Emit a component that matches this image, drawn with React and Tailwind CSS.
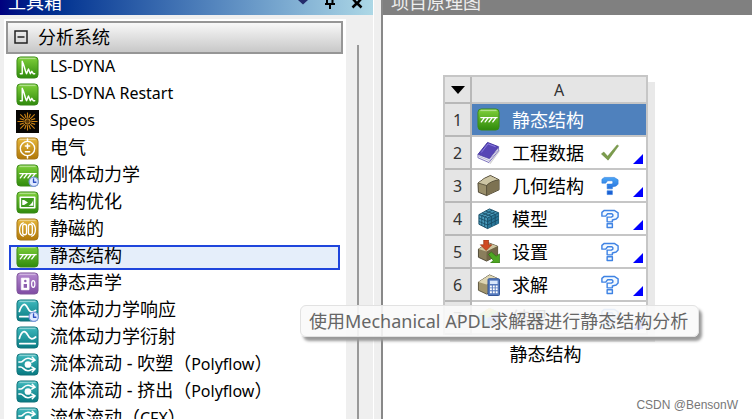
import React, { useState } from "react";

const TILE_COLORS = {
  green: { top: "#7fd03a", bottom: "#2f8a0c", edge: "#3c8a1a" },
  gold: { top: "#e6b73c", bottom: "#b07708", edge: "#a5761b" },
  purple: { top: "#b489cf", bottom: "#7f4ba3", edge: "#81589c" },
  teal: { top: "#3fb9bd", bottom: "#087a82", edge: "#14737a" },
};

const TileGradients = () => (
  <svg className="absolute h-0 w-0" aria-hidden="true">
    <defs>
      {Object.entries(TILE_COLORS).map(([name, c]) => (
        <linearGradient key={name} id={`tile-${name}`} x1="0" y1="0" x2="0" y2="1">
          <stop offset="0" stopColor={c.top} />
          <stop offset="1" stopColor={c.bottom} />
        </linearGradient>
      ))}
      <linearGradient id="help-blue" x1="0" y1="0" x2="0" y2="1">
        <stop offset="0" stopColor="#4aa5f5" />
        <stop offset="1" stopColor="#1557d0" />
      </linearGradient>
    </defs>
  </svg>
);

const Icon = ({ children }) => (
  <svg viewBox="0 0 24 24" className="h-[23px] w-[23px] shrink-0" fill="none" aria-hidden="true">
    {children}
  </svg>
);

const Tile = ({ color, children }) => (
  <Icon>
    <rect x="1" y="1" width="22" height="22" rx="3.5" fill={`url(#tile-${color})`} stroke={TILE_COLORS[color].edge} />
    <path d="M3.5 2.5h17" stroke="#fff" strokeOpacity=".4" strokeWidth="1.5" />
    <g stroke="#fff" strokeWidth="1.6" strokeLinecap="round" strokeLinejoin="round">
      {children}
    </g>
  </Icon>
);

const Clock = () => (
  <g>
    <circle cx="18.5" cy="18.5" r="4.8" fill="#dfe9ff" stroke="#7d97dc" strokeWidth="1.3" />
    <path d="M18.3 15.5v3.5h2.5" stroke="#2d4fc0" strokeWidth="1.4" />
  </g>
);

const Hatch = () => (
  <path d="M4 10h17M7.500 10.500L4.500 14.500M11.500 10.500l-3 4M15.500 10.500l-3 4M19.500 10.500l-3 4" strokeWidth="1.400" />
);

const ICONS = {
  dyna: (
    <Tile color="green">
      <path d="M4.500 18.500h2V5.500C8.500 9 9 14.500 11 18.500l2-5 2 5 1.500-2.500 1.500 2.500h1.500" strokeWidth="1.500" />
    </Tile>
  ),
  speos: (
    <Icon>
      <rect width="24" height="24" fill="#080603" />
      <path
        d="M12 8V2.5M12 16v5.5M8 12H1.5M16 12h6.5M9.2 9.2L4.5 4.5M14.8 9.2l4.7-4.7M9.2 14.8l-4.7 4.7M14.8 14.8l4.7 4.7M10.5 8.3L9 4M13.5 8.3L15 4M10.5 15.7L9 20M13.5 15.7L15 20M8.3 10.5L4 9M15.7 10.5L20 9M8.3 13.5L4 15M15.7 13.5L20 15"
        stroke="#c98316"
        strokeWidth="1.2"
      />
      <circle cx="12" cy="12" r="2.8" fill="#5c3906" stroke="#d8952a" />
    </Icon>
  ),
  electric: (
    <Tile color="gold">
      <circle cx="12" cy="12" r="7.5" strokeWidth="1.4" />
      <path d="M12 2v2.5M12 19.5V22M9.8 9.5h4.4M12 7.3v4.4M9.8 15.5h4.4" />
    </Tile>
  ),
  rigid: (
    <Tile color="green">
      <Hatch />
      <Clock />
    </Tile>
  ),
  structure: (
    <Tile color="green">
      <Hatch />
    </Tile>
  ),
  optimize: (
    <Tile color="green">
      <rect x="4.500" y="6.500" width="15" height="11" fill="#3d9a1c" strokeWidth="1.700" />
      <path d="M6.500 9.500h2l4 2.500-4 2.500h-2z" fill="#fff" stroke="none" />
      <path d="M18 9.500v6h-5c2.500-1 4-3 5-6z" fill="#fff" stroke="none" />
    </Tile>
  ),
  magnetic: (
    <Tile color="gold">
      <g strokeWidth="1.4">
        <path d="M7.500 5C2.500 7 2.500 17 7.500 19M16.500 5c5 2 5 12 0 14" />
        <rect x="7" y="6.500" width="4" height="11" rx="2" />
        <rect x="13" y="6.500" width="4" height="11" rx="2" />
      </g>
    </Tile>
  ),
  acoustic: (
    <Tile color="purple">
      <rect x="6" y="6.500" width="7.500" height="12" fill="#fff" strokeWidth="1" />
      <circle cx="9.700" cy="9.500" r="1.300" fill="#8d5fae" stroke="none" />
      <rect x="8" y="12.500" width="3.500" height="4" fill="#8d5fae" stroke="none" />
      <ellipse cx="18" cy="12.500" rx="1.700" ry="3.500" strokeWidth="1.300" />
    </Tile>
  ),
  response: (
    <Tile color="teal">
      <path d="M3.500 13C6 5 9.500 3.500 12 9s5 5 8.500 3M4 18.500h10" strokeWidth="1.800" />
      <Clock />
    </Tile>
  ),
  diffraction: (
    <Tile color="teal">
      <path d="M3.500 13C6 4.500 9.500 4 12 9s5 5.500 8.500 2.500M4 18.500h16" strokeWidth="1.800" />
    </Tile>
  ),
  flow: (
    <Tile color="teal">
      <circle cx="12.500" cy="12" r="3.500" fill="#fff" stroke="none" />
      <path
        d="M3 9.500h2C7.500 9.500 8 5.500 12.500 5.500c3 0 4 2 7 2M17 4.500l3 3-3.500 2M3 14.500h2c2.500 0 3 4 7.500 4 3 0 4-2 7-2M16.500 14.500l3.500 2-3 3"
        strokeWidth="1.600"
      />
    </Tile>
  ),
  book: (
    <Icon>
      <path d="M3 19l10 4.500L23.500 9v2L14 24z" fill="#777" opacity=".35" />
      <path d="M1 14L11 1.500 22.500 6 13 18.500z" fill="#5746b5" stroke="#4233a0" />
      <path d="M1 14v3.500l11.500 5L22.500 10V6.500L13 18.500z" fill="#f0eff7" stroke="#5d50ac" strokeWidth=".8" />
      <path d="M2 16l11 4.500L22 8.500" stroke="#b9b5d5" />
      <path d="M4.500 12l7-9 8 3" stroke="#8b7de0" />
    </Icon>
  ),
  geometry: (
    <Icon>
      <path d="M1 9.500Q8 3.500 14 1.500L23 6v10.500L10 22.500 1.500 19z" fill="#9a8f6b" stroke="#4b4431" />
      <path d="M1.500 9.500Q8 4 14 2l8.500 4Q14 7.500 10 12z" fill="#cdc5a4" />
      <path d="M10 12Q14 7.500 22.500 6v10.500L10 22.500z" fill="#7d7252" />
      <path d="M1.500 9.500L10 12v10.500M10 12Q14 7.500 22.500 6" stroke="#4b4431" strokeWidth=".8" />
    </Icon>
  ),
  mesh: (
    <Icon>
      <path d="M2 8l11-6 9.500 4v11L11 22.500 2 18z" fill="#4a9bbb" stroke="#174c65" />
      <path d="M11 11.500L22.500 6v11L11 22.500z" fill="#2a7799" />
      <path
        d="M2 8l9 3.500L22.500 6M11 11.500v11M5 9.200v10.500M8 10.400v10.600M2 11.500l9 3.700 11.500-5.700M2 15l9 3.800 11.500-5.800M15 9.600v10.700M19 7.700v11.100M5.500 6.200l9.500 3.400M9 4.200l10 3.500M16 3.300L5 9.200M19.500 4.700L8 10.400"
        stroke="#174c65"
        strokeWidth=".9"
      />
    </Icon>
  ),
  setup: (
    <Icon>
      <path d="M1.500 9.500L12 3l9.500 3.500V16L10 22 1.500 18z" fill="#8a7e5c" stroke="#4b4431" />
      <path d="M1.500 9.500L12 3l9.500 3.500L10 12z" fill="#cfc6a0" />
      <path d="M10 12l11.500-5.500V16L10 22z" fill="#706545" />
      <path d="M7 0h5v5h3.500l-6 6-6-6H7z" fill="#d04a22" stroke="#93300f" strokeWidth=".7" />
      <path d="M12 15l3-2.500 5 4.500 3.500-2.500V24H14l3-2.500z" fill="#4ea622" stroke="#2b7010" strokeWidth=".7" />
    </Icon>
  ),
  solution: (
    <Icon>
      <path d="M1.500 9.500L13 2l8 3.500V16L10 22 1.500 18z" fill="#a1956e" stroke="#5b533b" />
      <path d="M1.500 9.500L13 2l8 3.500L10 12z" fill="#ddd5b3" />
      <rect x="11.500" y="6" width="12" height="17.500" rx="1" fill="#5479bd" stroke="#2e5296" />
      <rect x="13.500" y="8" width="8" height="3.500" fill="#d8e7fb" />
      <path d="M13.500 14h8M13.500 17h8M13.500 20h8" stroke="#fff" strokeWidth="2" strokeDasharray="2 1" />
    </Icon>
  ),
  results: (
    <Icon>
      <path d="M1.500 9L13 2l9.500 4v10L11 22.500 1.500 18z" fill="#51c6e5" />
      <path d="M1.500 9L13 2l9.500 4L11 12.500z" fill="#9be44f" />
      <path d="M11 12.500L22.500 6v10L11 22.500z" fill="#4f6fe0" />
      <path d="M8 5l5-3 4 2-6 5z" fill="#f2d03c" />
    </Icon>
  ),
};

const HELP_PATH =
  "M1.500 7.500V3.500L4 1.500H14.500L18.500 4V8.500L16.500 10.500 12.500 11.500V13.500H7V8.500H11.500L13 7.500V6L12 5H7.500L5.500 7.500ZM7 15.500h5.500v4H7z";

const Status = ({ kind }) => {
  if (!kind) return null;
  return (
    <svg viewBox="0 0 20 21" className="h-5 w-5 shrink-0" fill="none" role="img" aria-label={kind}>
      {kind === "done" && (
        <path d="M1 11.500l2.500-2 4 4.500L17.500 2l1.500 1L8 18z" fill="#7c9c4c" stroke="#688a3c" strokeWidth=".6" />
      )}
      {kind === "attention" && <path d={HELP_PATH} fill="url(#help-blue)" stroke="#2b79dd" strokeWidth=".6" />}
      {kind === "pending" && (
        <path d={HELP_PATH} fill="#f4faff" stroke="#3f83e4" strokeWidth="1.500" strokeLinejoin="round" />
      )}
    </svg>
  );
};

const systems = [
  { name: "LS-DYNA", icon: "dyna" },
  { name: "LS-DYNA Restart", icon: "dyna" },
  { name: "Speos", icon: "speos" },
  { name: "电气", icon: "electric" },
  { name: "刚体动力学", icon: "rigid" },
  { name: "结构优化", icon: "optimize" },
  { name: "静磁的", icon: "magnetic" },
  { name: "静态结构", icon: "structure" },
  { name: "静态声学", icon: "acoustic" },
  { name: "流体动力学响应", icon: "response" },
  { name: "流体动力学衍射", icon: "diffraction" },
  { name: "流体流动 - 吹塑", solver: "Polyflow", icon: "flow" },
  { name: "流体流动 - 挤出", solver: "Polyflow", icon: "flow" },
  { name: "流体流动", solver: "CFX", icon: "flow" },
];

const cells = [
  { name: "静态结构", icon: "structure", header: true },
  { name: "工程数据", icon: "book", status: "done" },
  { name: "几何结构", icon: "geometry", status: "attention" },
  { name: "模型", icon: "mesh", status: "pending" },
  { name: "设置", icon: "setup", status: "pending" },
  { name: "求解", icon: "solution", status: "pending" },
  { name: "结果", icon: "results", status: "pending" },
];

const Toolbox = ({ selected, onSelect }) => (
  <aside className="flex w-[374px] shrink-0 flex-col border-r border-white bg-[#efefef]">
    <div className="flex h-[15px] shrink-0 items-end overflow-hidden bg-linear-to-r from-[#00007f] to-[#add8e6] pr-2 pl-2">
      <h2 className="flex-1 pb-px text-lg leading-6 text-white">工具箱</h2>
      <div className="flex items-end gap-[11px]">
        <button aria-label="菜单">
          <svg viewBox="0 0 16 16" className="block h-4 w-4" aria-hidden="true">
            <path d="M3 0h10v1L8 5.500 3 1z" fill="#252b6b" />
          </svg>
        </button>
        <button aria-label="固定">
          <svg viewBox="0 0 16 16" className="block h-4 w-4" fill="none" stroke="#000" strokeWidth="2" aria-hidden="true">
            <path d="M5 0v4M10.500 0v4M3 5h10M8 5v5" />
          </svg>
        </button>
        <button aria-label="关闭">
          <svg viewBox="0 0 16 16" className="block h-4 w-4" fill="none" stroke="#000" strokeWidth="2.500" aria-hidden="true">
            <path d="M4 0l4 4.500L12 0M3.500 8.500L8 4l4.500 4.500" />
          </svg>
        </button>
      </div>
    </div>

    <div className="flex min-h-0 flex-1 pt-1 pl-1">
      <div className="min-w-0 flex-1 overflow-hidden bg-white pt-[2px] pr-[3px] pl-[2px]">
        <button className="flex h-[33px] w-full items-center gap-[10px] border-2 border-[#969696] bg-linear-to-b from-[#f8f8f8] to-[#c8c8c8] pb-[2px] pl-[6px] text-lg">
          <svg viewBox="0 0 14 14" className="h-[14px] w-[14px]" fill="none" stroke="#222" strokeWidth="1.500" aria-hidden="true">
            <rect x="1" y="1" width="12" height="12" />
            <path d="M3.500 7h7" />
          </svg>
          分析系统
        </button>
        <ul>
          {systems.map((item) => {
            const label = item.name + (item.solver || "");
            return (
              <li key={label} className="flex h-[27px] items-end pr-[3px] pl-[3px]">
                <button
                  onClick={() => onSelect(label)}
                  className={`flex h-[25px] w-full items-start gap-[11px] pl-[7px] text-left text-lg leading-5 whitespace-nowrap ${
                    selected === label ? "bg-[#e5eefa] outline-2 -outline-offset-2 outline-[#1f45dc]" : ""
                  }`}
                >
                  {ICONS[item.icon]}
                  <span className={/^[A-Z]/.test(item.name) ? "text-base leading-5" : ""}>
                    {item.name}
                    {item.solver && (
                      <>
                        （<span className="text-base leading-5">{item.solver}</span>）
                      </>
                    )}
                  </span>
                </button>
              </li>
            );
          })}
        </ul>
      </div>
      <div className="flex w-[27px] shrink-0 justify-center pt-[26px] pr-1">
        <div className="w-[2px] bg-[#999]" />
      </div>
    </div>
  </aside>
);

const SystemTable = () => (
  <figure className="w-[205px]">
    <table className="w-full border-separate border-spacing-0 border-t-2 border-l-2 border-[#c6c6c6] shadow-[7px_7px_0_#e9e9e9]">
      <thead>
        <tr className="bg-[#e5e5e5] text-base leading-6 text-[#333]">
          <th className="h-[27px] w-[27px] border-r-2 border-b-2 border-[#b8b8b8] p-0">
            <button aria-label="展开" className="flex w-full justify-center">
              <svg viewBox="0 0 14 8" className="h-2 w-[14px]" aria-hidden="true">
                <path d="M0 0h14L7 8z" fill="#000" />
              </svg>
            </button>
          </th>
          <th className="border-r-2 border-b-2 border-[#c6c6c6] p-0 font-normal">A</th>
        </tr>
      </thead>
      <tbody>
        {cells.map((cell, index) => (
          <tr key={cell.name}>
            <th className="h-[33px] border-r-2 border-b-2 border-[#b8b8b8] bg-[#e5e5e5] p-0 text-base font-normal text-[#333]">
              {index + 1}
            </th>
            <td
              className={`border-r-2 border-b-2 border-[#c6c6c6] p-0 ${
                cell.header ? "bg-[#4f81bd] text-white" : "bg-white"
              }`}
            >
              <div className="flex h-[31px] items-center pr-[3px] pl-[5px] text-lg">
                {ICONS[cell.icon]}
                <span className="ml-3 w-[88px]">{cell.name}</span>
                <Status kind={cell.status} />
                {!cell.header && (
                  <svg viewBox="0 0 10 10" className="mb-1 ml-auto h-[10px] w-[10px] self-end" aria-hidden="true">
                    <path d="M10 0v10H0z" fill="#00f" />
                  </svg>
                )}
              </div>
            </td>
          </tr>
        ))}
      </tbody>
    </table>
    <figcaption className="mt-[5px] text-center text-lg">静态结构</figcaption>
  </figure>
);

const App = () => {
  const [selected, setSelected] = useState("静态结构");

  return (
    <div className="relative flex h-screen overflow-hidden bg-[#efefef] font-['Noto_Sans','Noto_Sans_CJK_SC',sans-serif] text-black">
      <TileGradients />
      <Toolbox selected={selected} onSelect={setSelected} />

      <main className="ml-[7px] flex min-w-0 flex-1 flex-col border-l-2 border-[#888] bg-white">
        <div className="flex h-[15px] shrink-0 items-end overflow-hidden bg-[#808080] pl-2">
          <h2 className="pb-px text-lg leading-6 text-[#eee]">项目原理图</h2>
        </div>
        <div className="min-h-0 flex-1 pt-[60px] pl-[60px]">
          <SystemTable />
        </div>
        <p className="pr-[14px] pb-1 text-right font-['Liberation_Sans',sans-serif] text-xs leading-5 text-[#777]">
          CSDN @BensonW
        </p>
      </main>

      {/* hover hint for the selected system */}
      <div
        role="tooltip"
        className="absolute top-[305px] left-[300px] rounded-md border border-[#e2e2e2] bg-[#fafafa]/90 pr-[10px] pl-2 text-lg leading-[30px] whitespace-nowrap text-[#666] shadow-[3px_4px_3px_#999]"
      >
        使用Mechanical APDL求解器进行静态结构分析
      </div>
    </div>
  );
};

export default App;
